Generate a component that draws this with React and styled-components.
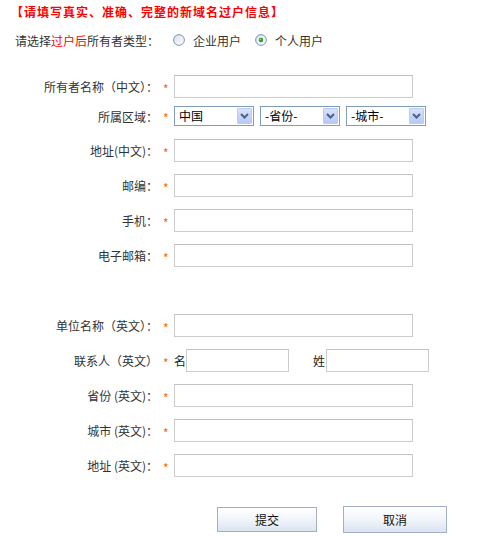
// react
import React from 'react';

// styles
import styled, { createGlobalStyle } from 'styled-components';

const GlobalStyle = createGlobalStyle`
	body {
		margin: 0;
		background: #fff;
		font-family: "Noto Sans CJK SC", "Liberation Sans", sans-serif;
		font-size: 12px;
		color: #333;
	}
`;

const topFields = [
	{ label: '地址(中文)：' },
	{ label: '邮编：' },
	{ label: '手机：' },
	{ label: '电子邮箱：' },
];

const bottomFields = [
	{ label: '省份 (英文)：' },
	{ label: '城市 (英文)：' },
	{ label: '地址 (英文)：' },
];

const Radio = ({ checked }) => (
	<RadioIcon width="12" height="12" viewBox="0 0 12 12">
		<defs>
			<linearGradient id="rg" x1="0" y1="0" x2="1" y2="1">
				<stop offset="0" stopColor="#d8dde6" />
				<stop offset="1" stopColor="#ffffff" />
			</linearGradient>
		</defs>
		<circle cx="6" cy="6" r="5.4" fill="url(#rg)" stroke="#1c5180" strokeOpacity="0.55" />
		{checked && <circle cx="6" cy="6" r="2.2" fill="#2e9b2e" />}
		{checked && <circle cx="5.5" cy="5.5" r="0.8" fill="#8fd88f" />}
	</RadioIcon>
);

const Select = ({ value }) => (
	<SelectBox>
		<SelectValue>{value}</SelectValue>
		<SelectButton>
			<svg width="9" height="6" viewBox="0 0 9 6">
				<path d="M1 1 L4.5 4.5 L8 1" fill="none" stroke="#4d6185" strokeWidth="2" />
			</svg>
		</SelectButton>
	</SelectBox>
);

const Field = ({ label, gapBefore }) => (
	<Row $gapBefore={gapBefore}>
		<Label>{label}</Label>
		<Star>*</Star>
		<TextInput />
	</Row>
);

export default function App() {
	return (
		<Page>
			<GlobalStyle />
			<Title>【请填写真实、准确、完整的新域名过户信息】</Title>
			<TypeRow>
				<span>
					请选择<Red>过户后</Red>所有者类型：
				</span>
				<Choice>
					<Radio />
					<span>企业用户</span>
				</Choice>
				<Choice>
					<Radio checked />
					<span>个人用户</span>
				</Choice>
			</TypeRow>

			<Form>
				<Field label="所有者名称（中文）：" />
				<Row $compact>
					<Label>所属区域：</Label>
					<Star>*</Star>
					<Selects>
						<Select value="中国" />
						<Select value="-省份-" />
						<Select value="-城市-" />
					</Selects>
				</Row>
				{topFields.map((f) => (
					<Field key={f.label} label={f.label} />
				))}

				<Field label="单位名称（英文）：" gapBefore={35} />
				<Row>
					<Label>联系人（英文）</Label>
					<Star>*</Star>
					<NamePart>名</NamePart>
					<TextInput $width={103} />
					<NamePart $offset={24}>姓</NamePart>
					<TextInput $width={103} />
				</Row>
				{bottomFields.map((f) => (
					<Field key={f.label} label={f.label} />
				))}

				<Buttons>
					<Button $w={100} $h={25}>提交</Button>
					<Button $w={104} $h={27}>取消</Button>
				</Buttons>
			</Form>
		</Page>
	);
}

// styles
const Page = styled.div`
	width: 500px;
	min-height: 536px;
`;

const Title = styled.div`
	height: 24px;
	line-height: 24px;
	padding-left: 11px;
	color: #ff0000;
	font-weight: bold;
	letter-spacing: 1px;
`;

const TypeRow = styled.div`
	display: flex;
	align-items: center;
	height: 32px;
	padding-left: 15px;
`;

const Red = styled.span`
	color: #f00;
`;

const Choice = styled.label`
	display: flex;
	align-items: center;
	gap: 8px;
	margin-left: 14px;
`;

const RadioIcon = styled.svg`
	display: block;
	flex-shrink: 0;
`;

const Form = styled.div`
	display: flex;
	flex-direction: column;
	gap: 12px;
	padding-top: 19px;
`;

const Row = styled.div`
	display: flex;
	align-items: center;
	height: ${({ $compact }) => ($compact ? '20px' : '23px')};
	margin: ${({ $compact }) => ($compact ? '-4px 0 1px' : '0')};
	margin-top: ${({ $gapBefore }) => ($gapBefore ? `${$gapBefore}px` : undefined)};
`;

const Label = styled.div`
	width: 158px;
	flex-shrink: 0;
	text-align: right;
	white-space: nowrap;
`;

const Star = styled.div`
	width: 16px;
	flex-shrink: 0;
	padding: 4px 0 0 5px;
	box-sizing: border-box;
	color: #ff6600;
	line-height: 1;
`;

const TextInput = styled.input`
	box-sizing: border-box;
	width: ${({ $width }) => ($width ? `${$width}px` : '239px')};
	height: 23px;
	margin: 0;
	padding: 0 3px;
	border: 1px solid #cccccc;
	border-top-color: #c2c2c2;
	background: #fff;
	font: inherit;
	outline: none;
`;

const NamePart = styled.span`
	width: 12px;
	margin-left: ${({ $offset }) => ($offset ? `${$offset}px` : '0')};
	margin-right: ${({ $offset }) => ($offset ? '1px' : '0')};
	color: #222;
`;

const Selects = styled.div`
	display: flex;
	gap: 6px;
`;

const SelectBox = styled.div`
	box-sizing: border-box;
	display: flex;
	align-items: center;
	width: 80px;
	height: 20px;
	padding: 1px;
	border: 1px solid #7f9db9;
	background: #fff;
	color: #000;
`;

const SelectValue = styled.span`
	flex: 1;
	padding-left: 3px;
	line-height: 16px;
	white-space: nowrap;
	overflow: hidden;
`;

const SelectButton = styled.span`
	box-sizing: border-box;
	display: flex;
	align-items: center;
	justify-content: center;
	width: 15px;
	height: 16px;
	border: 1px solid #bccbf2;
	border-radius: 1px;
	background: linear-gradient(#d6e2fd, #b6c9f7);
`;

const Buttons = styled.div`
	display: flex;
	align-items: center;
	gap: 26px;
	height: 27px;
	margin-top: 17px;
	padding-left: 217px;
`;

const Button = styled.button`
	box-sizing: border-box;
	width: ${({ $w }) => $w}px;
	height: ${({ $h }) => $h}px;
	padding: 0;
	border: 1px solid #a3b0c4;
	background: linear-gradient(#ffffff 0%, #f3f6fb 45%, #dbe4f2 100%);
	color: #111;
	font: inherit;
	font-size: 12px;
	cursor: pointer;
`;
